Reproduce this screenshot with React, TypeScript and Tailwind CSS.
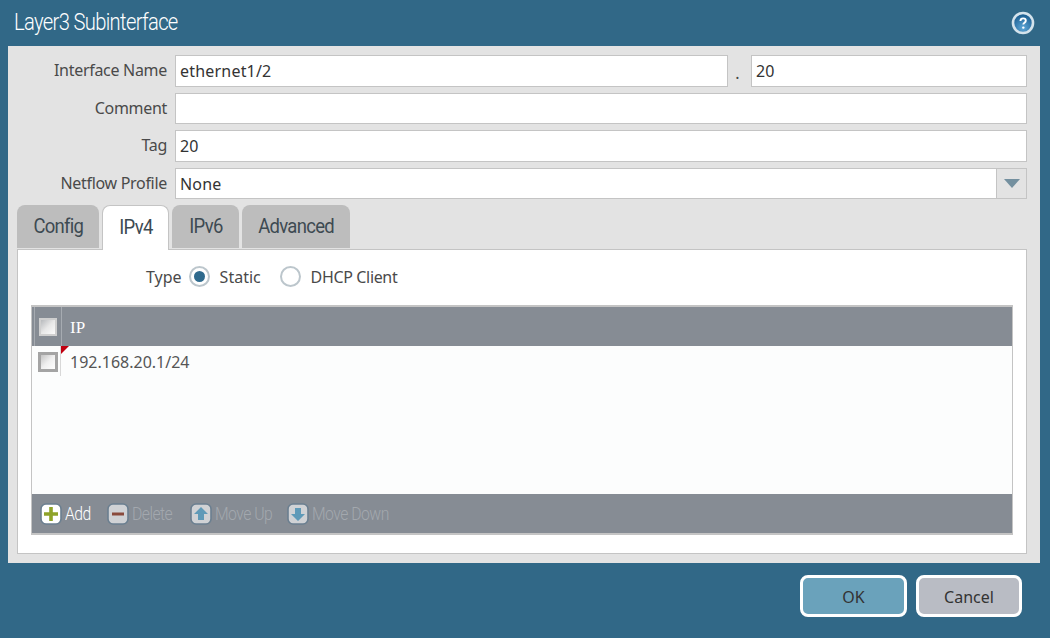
import React from "react";

const body = "font-['Noto_Sans',sans-serif]";
const head = "font-['Roboto',sans-serif]";

function Field({ label, children }: { label: string; children: React.ReactNode }) {
  return (
    <div className="flex items-stretch">
      <div className={`w-[158px] shrink-0 pr-[8px] text-right text-[16px] leading-[30px] tracking-[-0.3px] text-[#4a4a4a] ${body}`}>{label}</div>
      {children}
    </div>
  );
}

function Input({ value, cls = "" }: { value?: string; cls?: string }) {
  return (
    <div className={`border border-[#c4c4c4] bg-white pl-[4px] text-[16px] leading-[30px] tracking-[0.2px] text-[#333] ${body} ${cls}`}>{value}</div>
  );
}

function ToolIcon({ kind, dim }: { kind: "add" | "del" | "up" | "down"; dim?: boolean }) {
  return (
    <svg width="22" height="22" viewBox="0 0 22 22" className="shrink-0">
      <rect x="1" y="1" width="20" height="20" rx="5" fill={dim ? "#d0d2d5" : "#ffffff"} stroke="#6b7f90" strokeWidth="1.6" />
      {kind === "add" && <path d="M11 4v14M4 11h14" stroke="#8ea32a" strokeWidth="3.6" />}
      {kind === "del" && <path d="M5 11h12" stroke="#8a4a3c" strokeWidth="3" />}
      {kind === "up" && <path d="M11 4l7 7h-4v6H8v-6H4z" fill="#5f9ab8" />}
      {kind === "down" && <path d="M11 18l7-7h-4V5H8v6H4z" fill="#5f9ab8" />}
    </svg>
  );
}

function Tool({ kind, label, dim, cls }: { kind: "add" | "del" | "up" | "down"; label: string; dim?: boolean; cls: string }) {
  return (
    <div className={`flex items-center gap-[3px] ${cls}`}>
      <ToolIcon kind={kind} dim={dim} />
      <span className={`${head} inline-block origin-left scale-x-[0.875] whitespace-nowrap text-[18px] font-light tracking-[-0.6px] ${dim ? "text-[#a3a8ae]" : "text-white"}`}>{label}</span>
    </div>
  );
}

function Tab({ label, cls, active }: { label: string; cls: string; active?: boolean }) {
  return (
    <div
      className={`flex items-center justify-center rounded-t-[8px] ${
        active ? "relative z-10 h-[45px] border border-b-0 border-[#c4c4c4] bg-white" : "h-[43px] bg-[#bdbdbd]"
      } ${cls}`}
    >
      <span className={`${head} inline-block scale-x-[0.88] text-[21px] tracking-[-0.8px] text-[#3d4a52]`}>{label}</span>
    </div>
  );
}

function Radio({ on }: { on?: boolean }) {
  return (
    <div className="flex h-[21px] w-[21px] items-center justify-center rounded-full border-2 border-[#bcc6cc] bg-white">
      {on && <div className="h-[11px] w-[11px] rounded-full bg-[#2f6a8d]" />}
    </div>
  );
}

export default function App() {
  return (
    <div className="flex h-[638px] w-[1050px] flex-col overflow-hidden bg-[#316887]">
      <div className="flex h-[46px] items-center justify-between pl-[14px] pr-[15px]">
        <span className={`${head} inline-block origin-left scale-x-[0.877] whitespace-nowrap text-[23px] font-light tracking-[-0.75px] text-white`}>Layer3 Subinterface</span>
        <svg width="24" height="24" viewBox="0 0 24 24" className="mb-[1px]">
          <defs>
            <radialGradient id="h" cx="50%" cy="75%" r="65%">
              <stop offset="0%" stopColor="#5fa8d8" />
              <stop offset="100%" stopColor="#1c5f92" />
            </radialGradient>
          </defs>
          <circle cx="12" cy="12" r="10" fill="url(#h)" stroke="#d4e3ec" strokeWidth="2.6" />
          <path d="M9.4 10c.1-1.7 1.2-2.6 2.7-2.6 1.6 0 2.7 1 2.7 2.3 0 2-2.5 2-2.5 3.8" fill="none" stroke="#fff" strokeWidth="1.9" />
          <circle cx="12.3" cy="16.6" r="1.2" fill="#fff" />
        </svg>
      </div>

      <div className="ml-[8px] mr-[10px] flex h-[517px] flex-col bg-[#e3e3e3] pl-[9px] pr-[13px] pt-[9px]">
        <div className="flex flex-col gap-[6px]">
          <Field label="Interface Name">
            <Input value="ethernet1/2" cls="h-[32px] w-[553px]" />
            <div className={`h-[32px] w-[23px] pr-[4px] text-center text-[16px] leading-[36px] text-[#444] ${body}`}>.</div>
            <Input value="20" cls="h-[32px] flex-1" />
          </Field>
          <Field label="Comment">
            <Input cls="h-[31px] flex-1" />
          </Field>
          <Field label="Tag">
            <Input value="20" cls="h-[32px] flex-1" />
          </Field>
          <Field label="Netflow Profile">
            <div className="flex h-[31px] flex-1 border border-[#c4c4c4] bg-white">
              <div className={`flex-1 pl-[4px] text-[16px] leading-[30px] tracking-[0.2px] text-[#333] ${body}`}>None</div>
              <div className="flex w-[30px] items-center justify-center border-l border-[#c4c4c4] bg-[#e3e3e3]">
                <svg width="16" height="9" viewBox="0 0 16 9">
                  <path d="M0 0h16L8 9z" fill="#74909f" />
                </svg>
              </div>
            </div>
          </Field>
        </div>

        <div className="mt-[6px] flex h-[44px] items-start gap-[3px]">
          <Tab label="Config" cls="w-[82px]" />
          <Tab label="IPv4" cls="w-[67px]" active />
          <Tab label="IPv6" cls="w-[67px]" />
          <Tab label="Advanced" cls="w-[108px]" />
        </div>

        <div className="flex h-[305px] flex-col border border-[#c4c4c4] bg-white px-[13px] pt-[15px]">
          <div className={`flex h-[23px] items-center pl-[115px] text-[16px] text-[#4a4a4a] ${body}`}>
            <span className="mr-[7px]">Type</span>
            <Radio on />
            <span className="ml-[10px] mr-[19px] w-[41px]">Static</span>
            <Radio />
            <span className="ml-[10px] tracking-[-0.35px]">DHCP Client</span>
          </div>

          <div className="mt-[17px] flex h-[230px] flex-col border border-b-2 border-t-2 border-[#c4c4c4] bg-[#fcfdfd]">
            <div className="flex h-[39px] bg-[#868c94]">
              <div className="ml-[2px] flex w-[28px] items-center justify-center border-x border-[#a6abb1]">
                <div className="h-[18px] w-[18px] border-2 border-[#cfcfcf] bg-gradient-to-br from-[#b8babd] via-[#e8e8e8] to-[#fbfbfb]" />
              </div>
              <div className="pl-[8px] font-['Liberation_Serif',serif] text-[17px] leading-[41px] text-white">IP</div>
            </div>
            <div className="relative flex h-[30px]">
              <div className="flex w-[29px] items-center justify-center border-r border-[#d8d8d8] pl-[4px]">
                <div className="mt-[1px] h-[20px] w-[20px] shrink-0 border-[3px] border-[#a4a4a4] bg-gradient-to-br from-[#c4c4c4] via-[#efefef] to-[#ffffff]" />
              </div>
              <div className="absolute left-[29px] top-0 h-0 w-0 border-r-[8px] border-t-[8px] border-r-transparent border-t-[#c00010]" />
              <div className={`pl-[9px] text-[16px] leading-[33px] text-[#555] ${body}`}>192.168.20.1/24</div>
            </div>
            <div className="flex-1" />
            <div className="flex h-[39px] items-center bg-[#868c94] pl-[8px]">
              <Tool kind="add" label="Add" cls="w-[67px]" />
              <Tool kind="del" label="Delete" dim cls="w-[83px]" />
              <Tool kind="up" label="Move Up" dim cls="w-[97px]" />
              <Tool kind="down" label="Move Down" dim cls="" />
            </div>
          </div>
        </div>
      </div>

      <div className={`mt-[12px] flex gap-[9px] pl-[800px] ${body} text-[16px] text-[#333]`}>
        <div className="flex h-[42px] w-[107px] items-center justify-center rounded-[8px] border-[3px] border-white bg-[#6aa2bb] pt-[1px]">OK</div>
        <div className="flex h-[42px] w-[106px] items-center justify-center rounded-[8px] border-[3px] border-white bg-[#b9bcc4] pt-[1px]">Cancel</div>
      </div>
    </div>
  );
}
